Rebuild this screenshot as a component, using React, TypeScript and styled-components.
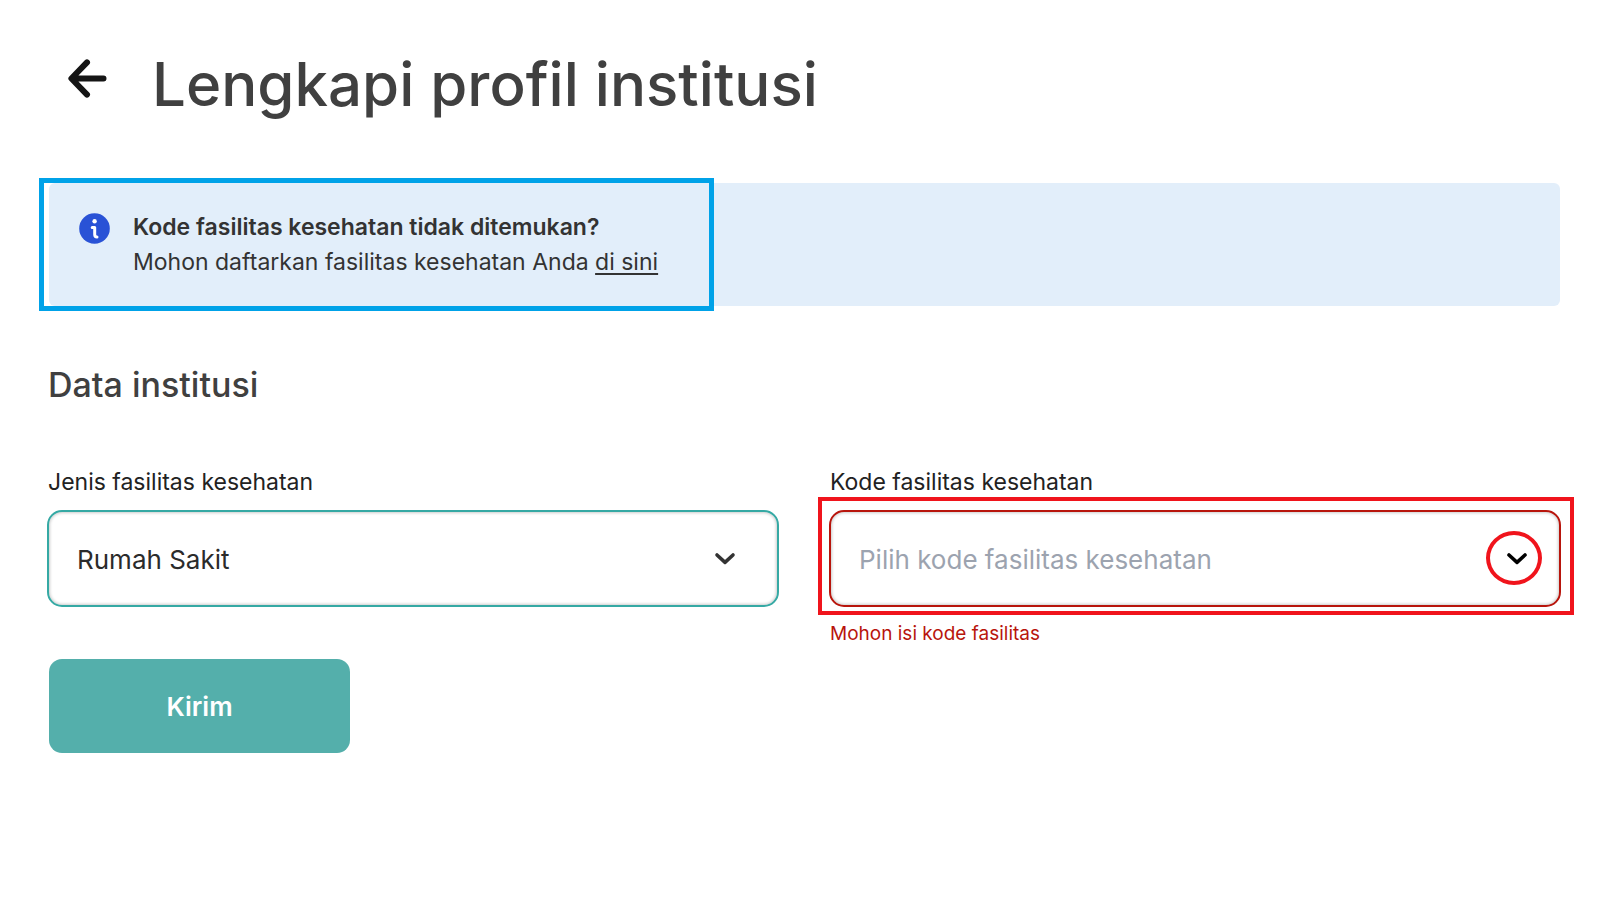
import React from 'react';
import styled, { createGlobalStyle } from 'styled-components';

const GlobalStyle = createGlobalStyle`
  *, *::before, *::after { box-sizing: border-box; }
  body {
    margin: 0;
    background: #fff;
    color: #333;
    font-family: Inter, "Liberation Sans", sans-serif;
  }
`;

const Page = styled.main`
  padding: 48px 39px 48px 47px;
`;

const Header = styled.header`
  display: flex;
  align-items: center;
  gap: 45px;
  padding-left: 21px;
`;

const BackButton = styled.button`
  display: flex;
  padding: 0 0 12px;
  border: 0;
  background: none;
  color: #151515;
  cursor: pointer;
`;

const Title = styled.h1`
  margin: 0;
  font-size: 60px;
  line-height: 72px;
  font-weight: 500;
  color: #404040;
`;

const Banner = styled.section`
  position: relative;
  display: flex;
  align-items: flex-start;
  gap: 23px;
  margin: 63px 1px 0 2px;
  padding: 27px 30px 26px;
  border-radius: 6px;
  background: #e2eefa;
`;

const BannerIcon = styled.svg`
  flex: none;
  margin-top: 3px;
`;

const BannerText = styled.p`
  margin: 0;
  font-size: 23px;
  line-height: 35px;
  font-weight: 400;
`;

const BannerHeading = styled.strong`
  display: block;
  font-weight: 600;
`;

const TextLink = styled.a`
  color: inherit;
  text-decoration: underline;
  text-decoration-thickness: 2px;
  text-underline-offset: 3px;
`;

const BlueFrame = styled.span`
  position: absolute;
  top: -5px;
  bottom: -5px;
  left: -10px;
  width: 675px;
  border: 5px solid #00a2e8;
  pointer-events: none;
`;

const SectionTitle = styled.h2`
  margin: 58px 0 0 1px;
  font-size: 34px;
  line-height: 42px;
  font-weight: 500;
  color: #404040;
`;

const Fields = styled.div`
  display: grid;
  grid-template-columns: 1fr 1fr;
  gap: 50px;
  margin-top: 61px;
`;

const Field = styled.div`
  display: flex;
  flex-direction: column;
`;

const Label = styled.label`
  padding-left: 1px;
  font-size: 23px;
  line-height: 30px;
  color: #222;
`;

const SelectBox = styled.div`
  position: relative;
  margin-top: 13px;
`;

const Select = styled.select<{ $invalid?: boolean }>`
  display: block;
  width: 100%;
  height: 97px;
  padding: 2px 80px 0 28px;
  border: 2px solid ${(p) => (p.$invalid ? '#b8150c' : '#35a9a4')};
  border-radius: 15px;
  background: #fff;
  box-shadow: inset 0 0 3px 1px rgba(0, 0, 0, 0.2);
  appearance: none;
  font-family: inherit;
  font-size: 26px;
  color: ${(p) => (p.$invalid ? '#9ca3af' : '#2b2b2b')};
`;

const Chevron = styled.svg<{ $marked?: boolean }>`
  position: absolute;
  top: 42px;
  right: ${(p) => (p.$marked ? 33 : 43)}px;
  color: ${(p) => (p.$marked ? '#000' : '#333')};
  pointer-events: none;
`;

const RedFrame = styled.span`
  position: absolute;
  inset: -13px -13px -8px -11px;
  border: 4px solid #f0141c;
  pointer-events: none;
`;

const RedCircle = styled.span`
  position: absolute;
  top: 21px;
  right: 19px;
  width: 56px;
  height: 54px;
  border: 4px solid #f0141c;
  border-radius: 50%;
  pointer-events: none;
`;

const ErrorText = styled.p`
  margin: 15px 0 0;
  padding-left: 1px;
  font-size: 19px;
  line-height: 24px;
  color: #b8150c;
`;

const SubmitButton = styled.button`
  width: 301px;
  height: 94px;
  margin: 13px 0 0 2px;
  border: 0;
  border-radius: 13px;
  background: #54afab;
  color: #fff;
  font-family: inherit;
  font-size: 26px;
  font-weight: 600;
  cursor: pointer;
`;

function ChevronIcon({ marked }: { marked?: boolean }) {
  return (
    <Chevron $marked={marked} width="22" height="14" viewBox="0 0 22 14" fill="none" aria-hidden="true">
      <path d="M3 3 L11 10.3 L19 3" stroke="currentColor" strokeWidth="3.6" strokeLinecap="round" strokeLinejoin="round" />
    </Chevron>
  );
}

export default function App() {
  return (
    <>
      <GlobalStyle />
      <Page>
        <Header>
          <BackButton type="button" aria-label="Kembali">
            <svg width="39" height="39" viewBox="0 0 39 39" fill="none" aria-hidden="true">
              <path d="M19 3.4 L3.4 19.5 L19 35.6 M4 19.5 H35.5" stroke="currentColor" strokeWidth="6" strokeLinecap="round" strokeLinejoin="round" />
            </svg>
          </BackButton>
          <Title>Lengkapi profil institusi</Title>
        </Header>

        <Banner>
          <BannerIcon width="31" height="31" viewBox="0 0 31 31" fill="none" aria-hidden="true">
            <circle cx="15.5" cy="15.5" r="15.3" fill="#2952d6" />
            <circle cx="15.6" cy="8.2" r="2.2" fill="#fff" />
            <path d="M13.2 14.5 H15.7 V21.5 Q15.7 24 18 24" stroke="#fff" strokeWidth="3" strokeLinecap="round" strokeLinejoin="round" />
          </BannerIcon>
          <BannerText>
            <BannerHeading>Kode fasilitas kesehatan tidak ditemukan?</BannerHeading>
            Mohon daftarkan fasilitas kesehatan Anda <TextLink href="#daftar">di sini</TextLink>
          </BannerText>
          <BlueFrame />
        </Banner>

        <form onSubmit={(e) => e.preventDefault()}>
          <SectionTitle>Data institusi</SectionTitle>
          <Fields>
            <Field>
              <Label htmlFor="jenis">Jenis fasilitas kesehatan</Label>
              <SelectBox>
                <Select id="jenis" defaultValue="rs">
                  <option value="rs">Rumah Sakit</option>
                </Select>
                <ChevronIcon />
              </SelectBox>
            </Field>
            <Field>
              <Label htmlFor="kode">Kode fasilitas kesehatan</Label>
              <SelectBox>
                <Select id="kode" defaultValue="" $invalid aria-invalid="true" aria-describedby="kode-error">
                  <option value="">Pilih kode fasilitas kesehatan</option>
                </Select>
                <ChevronIcon marked />
                <RedFrame />
                <RedCircle />
              </SelectBox>
              <ErrorText id="kode-error">Mohon isi kode fasilitas</ErrorText>
            </Field>
          </Fields>
          <SubmitButton type="submit">Kirim</SubmitButton>
        </form>
      </Page>
    </>
  );
}
